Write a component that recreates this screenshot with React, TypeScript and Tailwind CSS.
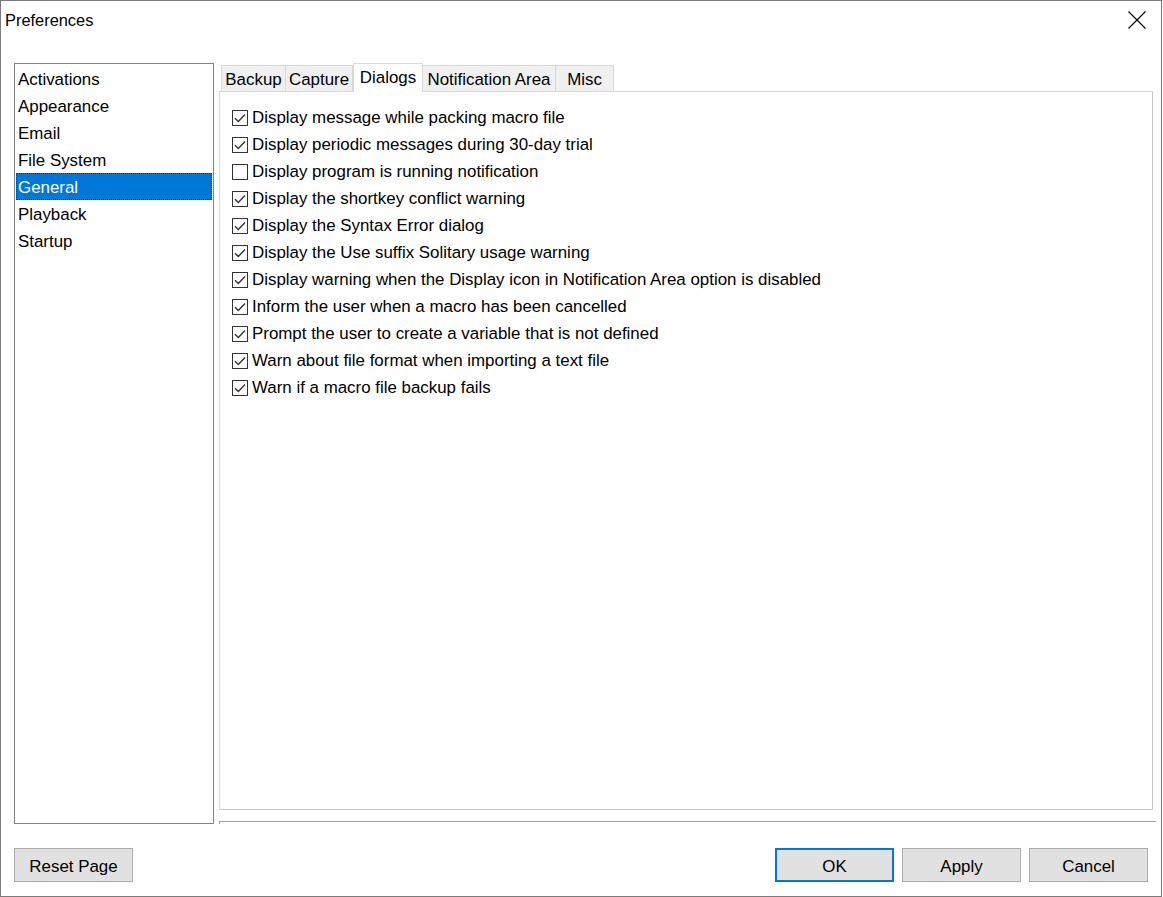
import React from "react";

const categories = ["Activations", "Appearance", "Email", "File System", "General", "Playback", "Startup"];

const tabs = [
  { label: "Backup", w: "w-[65px]" },
  { label: "Capture", w: "w-[68px]" },
  { label: "Dialogs", w: "w-[70px]" },
  { label: "Notification Area", w: "w-[134px]" },
  { label: "Misc", w: "w-[59px]" },
];

const options = [
  { label: "Display message while packing macro file", checked: true },
  { label: "Display periodic messages during 30-day trial", checked: true },
  { label: "Display program is running notification", checked: false },
  { label: "Display the shortkey conflict warning", checked: true },
  { label: "Display the Syntax Error dialog", checked: true },
  { label: "Display the Use suffix Solitary usage warning", checked: true },
  { label: "Display warning when the Display icon in Notification Area option is disabled", checked: true },
  { label: "Inform the user when a macro has been cancelled", checked: true },
  { label: "Prompt the user to create a variable that is not defined", checked: true },
  { label: "Warn about file format when importing a text file", checked: true },
  { label: "Warn if a macro file backup fails", checked: true },
];

function CheckBox({ checked }: { checked: boolean }) {
  return (
    <svg width="16" height="16" viewBox="0 0 16 16" className="shrink-0">
      <rect x="0.5" y="0.5" width="15" height="15" fill="#fff" stroke="#333" />
      {checked && <path d="M3 8.2 L6.3 11.5 L13 4.5" fill="none" stroke="#333" strokeWidth="1.4" />}
    </svg>
  );
}

export default function App() {
  return (
    <div
      className="w-[1162px] h-[897px] bg-white border border-[#7a7a7a] flex flex-col text-black text-[16.9px]"
      style={{ fontFamily: '"Liberation Sans", Arial, sans-serif' }}
    >
      {/* Title bar */}
      <div className="h-[62px] flex items-start justify-between">
        <div className="pl-[4px] pt-[8px] text-[16.4px] leading-[22px]">Preferences</div>
        <svg width="18" height="18" viewBox="0 0 18 18" className="mt-[10px] mr-[15px]">
          <path d="M0.5 0.5 L17.5 17.5 M17.5 0.5 L0.5 17.5" stroke="#000" strokeWidth="1.1" />
        </svg>
      </div>

      {/* Main */}
      <div className="flex pl-[13px] pr-[5px] gap-[5px] h-[761px]">
        <div className="w-[200px] h-full border border-[#828282] px-[1px] pt-[1px]">
          {categories.map((c) => (
            <div
              key={c}
              className={`h-[27px] flex items-center pl-[2px] pt-[2px] ${
                c === "General" ? "bg-[#0078d7] text-white outline outline-1 outline-dotted outline-[#333] -outline-offset-1" : ""
              }`}
            >
              {c}
            </div>
          ))}
        </div>

        <div className="flex-1 flex flex-col">
          {/* Tabs */}
          <div className="h-[28px] flex items-end pl-[2px] relative z-10">
            {tabs.map((t) =>
              t.label === "Dialogs" ? (
                <div
                  key={t.label}
                  className={`${t.w} h-[29px] -mb-[1px] bg-white border border-b-0 border-[#d9d9d9] flex items-start justify-center pt-[4px] leading-[20px]`}
                >
                  {t.label}
                </div>
              ) : (
                <div
                  key={t.label}
                  className={`${t.w} h-[26px] bg-[#f0f0f0] border border-b-0 border-[#d9d9d9] -ml-[1px] first:ml-0 flex items-center justify-center pt-[2px]`}
                >
                  {t.label}
                </div>
              )
            )}
          </div>

          {/* Panel */}
          <div className="w-[934px] h-[719px] border border-[#d9d9d9] border-r-[#c8c8c8] border-b-[#c8c8c8] bg-white pt-[12px] pl-[12px]">
            {options.map((o) => (
              <div key={o.label} className="h-[27px] flex items-center gap-[4px]">
                <CheckBox checked={o.checked} />
                <span className="whitespace-nowrap">{o.label}</span>
              </div>
            ))}
          </div>

          {/* Separator */}
          <div className="mt-[11px] h-[3px] border-t border-l border-[#a0a0a0]" />
        </div>
      </div>

      {/* Buttons */}
      <div className="flex justify-between pl-[13px] pr-[13px] mt-[24px]">
        <button className="w-[119px] h-[34px] pt-[3px] bg-[#e1e1e1] border border-[#adadad]">Reset Page</button>
        <div className="flex gap-[8px]">
          <button className="w-[119px] h-[34px] pt-[3px] bg-[#e1e1e1] border-2 border-[#0078d7]">OK</button>
          <button className="w-[119px] h-[34px] pt-[3px] bg-[#e1e1e1] border border-[#adadad]">Apply</button>
          <button className="w-[119px] h-[34px] pt-[3px] bg-[#e1e1e1] border border-[#adadad]">Cancel</button>
        </div>
      </div>
    </div>
  );
}
